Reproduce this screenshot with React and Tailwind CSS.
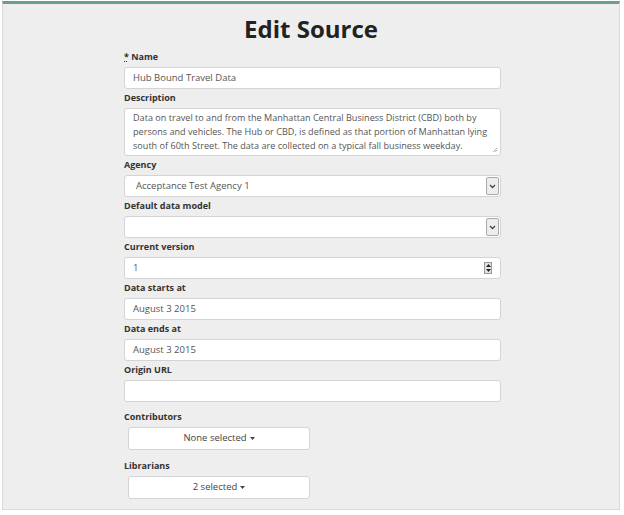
import React from 'react';

const font = { fontFamily: '"Open Sans", "Liberation Sans", sans-serif' };

function Label({ children }) {
  return (
    <label className="block h-[12px] mb-[4px] text-[9px] leading-[12px] font-bold text-[#333]">
      {children}
    </label>
  );
}

function TextInput({ value }) {
  return (
    <div className="h-[22px] bg-white border border-[#d4d4d4] rounded-[3px] px-[8px] flex items-center text-[9.5px] text-[#555]">
      {value}
    </div>
  );
}

function SelectInput({ value }) {
  return (
    <div className="h-[22px] bg-white border border-[#d4d4d4] rounded-[3px] pl-[11px] pr-[1px] flex items-center text-[9.5px] text-[#555]">
      <span className="flex-1">{value}</span>
      <span className="w-[13px] h-[18px] bg-[#ededed] border border-[#a9a9a9] rounded-[2px] flex items-center justify-center">
        <svg width="7" height="5" viewBox="0 0 7 5">
          <path d="M1 1 L3.5 3.5 L6 1" fill="none" stroke="#444" strokeWidth="1.3" />
        </svg>
      </span>
    </div>
  );
}

function DropButton({ label }) {
  return (
    <div className="ml-[4px] w-[182px] h-[23px] bg-white border border-[#d4d4d4] rounded-[3px] flex items-center justify-center gap-[3px] text-[9.5px] text-[#444]">
      {label}
      <svg width="5" height="3" viewBox="0 0 5 3">
        <path d="M0 0 L5 0 L2.5 3 Z" fill="#444" />
      </svg>
    </div>
  );
}

export default function App() {
  return (
    <div className="w-[624px] h-[515px] bg-white pt-[1px] pl-[2px]" style={font}>
      <div className="w-[618px] h-[509px] bg-[#eeeeee] border border-[#dadada] border-t-[3px] border-t-[#6b9f88]">
        <h1 className="text-center text-[24px] font-bold text-[#222] leading-[30px] pt-[10px] mb-[7px]">
          Edit Source
        </h1>

        <div className="w-[377px] ml-[121px]">
          <div className="mb-[3px]">
            <Label>
              <span className="underline decoration-dotted">*</span> Name
            </Label>
            <TextInput value="Hub Bound Travel Data" />
          </div>

          <div className="mb-[3px]">
            <Label>Description</Label>
            <div className="relative h-[48px] overflow-hidden bg-white border border-[#d4d4d4] rounded-[3px] pl-[8px] pr-[4px] pt-[2px] text-[9.1px] leading-[14px] text-[#555]">
              Data on travel to and from the Manhattan Central Business District (CBD) both by persons and vehicles. The Hub or CBD, is defined as that portion of Manhattan lying south of 60th Street. The data are collected on a typical fall business weekday.
              <svg className="absolute right-[2px] bottom-[2px]" width="6" height="6" viewBox="0 0 6 6">
                <path d="M5 1 L1 5 M5 3 L3 5" stroke="#999" strokeWidth="0.8" />
              </svg>
            </div>
          </div>

          <div className="mb-[3px]">
            <Label>Agency</Label>
            <SelectInput value="Acceptance Test Agency 1" />
          </div>

          <div className="mb-[3px]">
            <Label>Default data model</Label>
            <SelectInput value="" />
          </div>

          <div className="mb-[3px]">
            <Label>Current version</Label>
            <div className="h-[22px] bg-white border border-[#d4d4d4] rounded-[3px] pl-[8px] pr-[8px] flex items-center text-[9.5px] text-[#555]">
              <span className="flex-1">1</span>
              <span className="w-[8px] h-[12px] border border-[#999] bg-[#e4e4e4] flex flex-col items-center justify-around">
                <svg width="5" height="3" viewBox="0 0 5 3"><path d="M0 3 L5 3 L2.5 0 Z" fill="#222" /></svg>
                <svg width="5" height="3" viewBox="0 0 5 3"><path d="M0 0 L5 0 L2.5 3 Z" fill="#222" /></svg>
              </span>
            </div>
          </div>

          <div className="mb-[3px]">
            <Label>Data starts at</Label>
            <TextInput value="August 3 2015" />
          </div>

          <div className="mb-[3px]">
            <Label>Data ends at</Label>
            <TextInput value="August 3 2015" />
          </div>

          <div className="mb-[9px]">
            <Label>Origin URL</Label>
            <TextInput value="" />
          </div>

          <div className="mb-[10px]">
            <Label>Contributors</Label>
            <DropButton label="None selected" />
          </div>

          <div>
            <Label>Librarians</Label>
            <DropButton label="2 selected" />
          </div>
        </div>
      </div>
    </div>
  );
}
